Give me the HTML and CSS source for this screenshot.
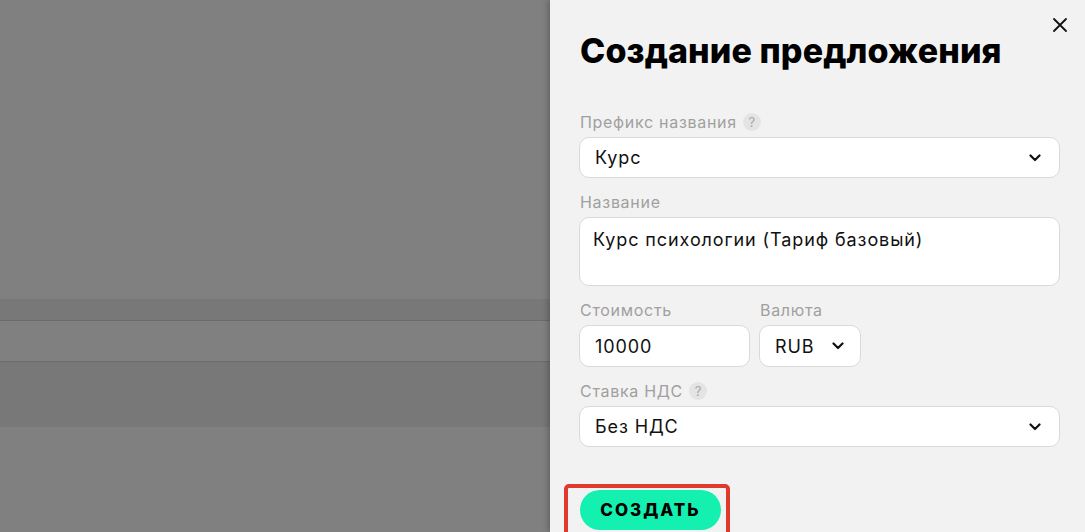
FILE: index.html
```html
<!DOCTYPE html>
<html lang="ru">
<head>
<meta charset="utf-8">
<title>Создание предложения</title>
<link rel="stylesheet" href="styles.css">
</head>
<body>
<div class="backdrop">
  <div class="band band-top"></div>
  <div class="band band-head"></div>
  <div class="band band-row"></div>
  <div class="band band-dark"></div>
  <div class="band band-rest"></div>
</div>
<aside class="panel">
  <button class="close" aria-label="Закрыть">
    <svg width="16" height="16" viewBox="0 0 16 16"><path d="M2 2 L14 14 M14 2 L2 14" stroke="#111" stroke-width="1.8" fill="none" stroke-linecap="round"/></svg>
  </button>
  <h1 class="title">Создание предложения</h1>

  <div class="field">
    <div class="label">Префикс названия <span class="hint">?</span></div>
    <div class="control select">
      <span>Курс</span>
      <svg class="chev" width="12" height="8" viewBox="0 0 12 8"><path d="M1.5 1.5 L6 6 L10.5 1.5" stroke="#111" stroke-width="2.2" fill="none" stroke-linecap="round" stroke-linejoin="round"/></svg>
    </div>
  </div>

  <div class="field">
    <div class="label">Название</div>
    <div class="control textarea">Курс психологии (Тариф базовый)</div>
  </div>

  <div class="row">
    <div class="field price">
      <div class="label">Стоимость</div>
      <div class="control">10000</div>
    </div>
    <div class="field currency">
      <div class="label">Валюта</div>
      <div class="control select">
        <span>RUB</span>
        <svg class="chev" width="12" height="8" viewBox="0 0 12 8"><path d="M1.5 1.5 L6 6 L10.5 1.5" stroke="#111" stroke-width="2.2" fill="none" stroke-linecap="round" stroke-linejoin="round"/></svg>
      </div>
    </div>
  </div>

  <div class="field">
    <div class="label">Ставка НДС <span class="hint">?</span></div>
    <div class="control select">
      <span>Без НДС</span>
      <svg class="chev" width="12" height="8" viewBox="0 0 12 8"><path d="M1.5 1.5 L6 6 L10.5 1.5" stroke="#111" stroke-width="2.2" fill="none" stroke-linecap="round" stroke-linejoin="round"/></svg>
    </div>
  </div>

  <div class="highlight">
    <button class="submit">СОЗДАТЬ</button>
  </div>
</aside>
</body>
</html>
```

FILE: styles.css
```css
* { box-sizing: border-box; }
html, body { margin: 0; padding: 0; }
body {
  width: 1085px;
  height: 532px;
  overflow: hidden;
  display: flex;
  font-family: Inter, "Noto Sans", sans-serif;
  background: #808080;
}
.backdrop {
  flex: 0 0 550px;
  display: flex;
  flex-direction: column;
  background: #808080;
}
.band-top { height: 299px; background: #808080; }
.band-head { height: 22px; background: #787878; border-bottom: 1px solid #6c6c6c; }
.band-row { height: 41px; background: #808080; border-bottom: 1px solid #6c6c6c; }
.band-dark { height: 65px; background: #787878; }
.band-rest { flex: 1; background: #808080; }

.panel {
  flex: 1;
  position: relative;
  background: #f2f2f2;
  padding: 26px 25px 0 29px;
  box-shadow: -2px 0 6px rgba(0,0,0,0.25);
  display: flex;
  flex-direction: column;
}
.close {
  position: absolute;
  top: 17px;
  right: 17px;
  width: 16px;
  height: 16px;
  padding: 0;
  border: 0;
  background: none;
  display: flex;
}
.title {
  margin: 0 0 36px 1px;
  font-size: 34px;
  line-height: 50px;
  font-weight: 800;
  color: #000;
  letter-spacing: 0.1px;
}
.field { display: flex; flex-direction: column; margin-bottom: 14px; }
.label {
  height: 20px;
  line-height: 20px;
  font-size: 16px;
  letter-spacing: 0.7px;
  color: #a0a0a0;
  margin-bottom: 5px;
  padding-left: 1px;
  display: flex;
  align-items: center;
}
.hint {
  width: 18px;
  height: 18px;
  border-radius: 50%;
  background: #e4e4e4;
  color: #a8a8a8;
  font-size: 13px;
  letter-spacing: 0;
  line-height: 18px;
  text-align: center;
  margin-left: 6px;
}
.control {
  height: 41px;
  background: #fff;
  border: 1px solid #d9d9d9;
  border-radius: 10px;
  padding: 0 14px 0 15px;
  font-size: 18px;
  letter-spacing: 0.9px;
  color: #111;
  display: flex;
  align-items: center;
}
.select { justify-content: space-between; padding-right: 18px; }
.textarea {
  height: 69px;
  align-items: flex-start;
  padding: 10px 13px;
  line-height: 24px;
}
.row { display: flex; gap: 9px; }
.price { flex: 0 0 171px; }
.price .control { height: 42px; }
.currency { flex: 0 0 102px; }
.currency .control { height: 42px; padding-right: 16px; }
.highlight {
  margin-top: 23px;
  margin-left: -15px;
  align-self: flex-start;
  border: 4px solid #e0392d;
  border-radius: 5px;
  padding: 2px 5px 6px 12px;
}
.submit {
  display: block;
  width: 141px;
  height: 40px;
  border: 0;
  border-radius: 20px;
  background: #14f0b0;
  color: #000;
  font-family: Inter, sans-serif;
  font-weight: 800;
  font-size: 17px;
  letter-spacing: 2px;
}
```
